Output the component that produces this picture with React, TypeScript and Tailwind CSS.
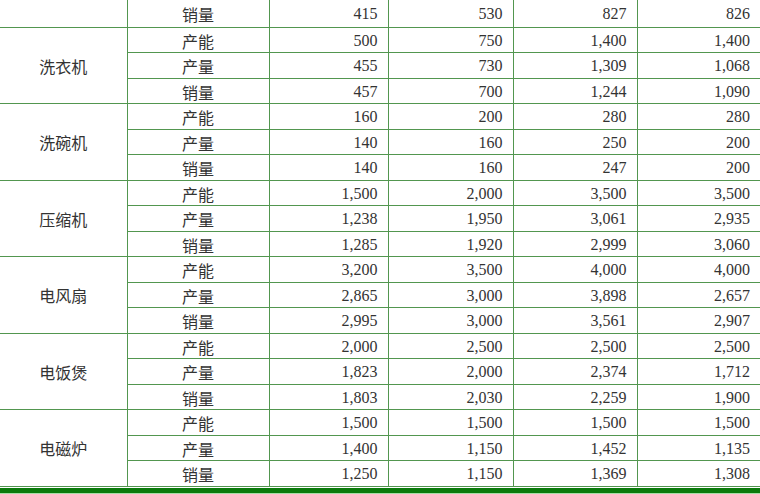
const groups: { name: string; rows: [string, string[]][] }[] = [
  {
    name: '洗衣机',
    rows: [
      ['产能', ['500', '750', '1,400', '1,400']],
      ['产量', ['455', '730', '1,309', '1,068']],
      ['销量', ['457', '700', '1,244', '1,090']],
    ],
  },
  {
    name: '洗碗机',
    rows: [
      ['产能', ['160', '200', '280', '280']],
      ['产量', ['140', '160', '250', '200']],
      ['销量', ['140', '160', '247', '200']],
    ],
  },
  {
    name: '压缩机',
    rows: [
      ['产能', ['1,500', '2,000', '3,500', '3,500']],
      ['产量', ['1,238', '1,950', '3,061', '2,935']],
      ['销量', ['1,285', '1,920', '2,999', '3,060']],
    ],
  },
  {
    name: '电风扇',
    rows: [
      ['产能', ['3,200', '3,500', '4,000', '4,000']],
      ['产量', ['2,865', '3,000', '3,898', '2,657']],
      ['销量', ['2,995', '3,000', '3,561', '2,907']],
    ],
  },
  {
    name: '电饭煲',
    rows: [
      ['产能', ['2,000', '2,500', '2,500', '2,500']],
      ['产量', ['1,823', '2,000', '2,374', '1,712']],
      ['销量', ['1,803', '2,030', '2,259', '1,900']],
    ],
  },
  {
    name: '电磁炉',
    rows: [
      ['产能', ['1,500', '1,500', '1,500', '1,500']],
      ['产量', ['1,400', '1,150', '1,452', '1,135']],
      ['销量', ['1,250', '1,150', '1,369', '1,308']],
    ],
  },
]

const cjk = "font-['Noto_Sans_CJK_SC',sans-serif]"
const num = "font-['Liberation_Serif',serif]"

function Values({ values }: { values: string[] }) {
  return (
    <>
      {values.map((v, i) => (
        <td
          key={i}
          className={`${num} pr-[10px] pt-[2px] text-right ${i < 3 ? 'border-r border-[#52964f]' : ''}`}
        >
          {v}
        </td>
      ))}
    </>
  )
}

export default function App() {
  return (
    <div className="w-[760px] h-[494px] overflow-hidden bg-white text-[16px] leading-none text-[#333]">
      <table className="w-[760px] table-fixed border-collapse">
        <colgroup>
          <col className="w-[127px]" />
          <col className="w-[142px]" />
          <col className="w-[119px]" />
          <col className="w-[125px]" />
          <col className="w-[124px]" />
          <col className="w-[123px]" />
        </colgroup>
        <tbody>
          <tr className="h-[27px] border-b border-[#52964f]">
            <td className="border-r border-[#52964f]" />
            <td className={`${cjk} text-center pt-[1px] border-r border-[#52964f]`}>销量</td>
            <Values values={['415', '530', '827', '826']} />
          </tr>
          {groups.map(g =>
            g.rows.map(([label, values], i) => (
              <tr key={g.name + label} className="h-[25.5px] border-b border-[#52964f]">
                {i === 0 && (
                  <td
                    rowSpan={3}
                    className={`${cjk} text-center pt-[1px] border-r border-[#52964f]`}
                  >
                    {g.name}
                  </td>
                )}
                <td className={`${cjk} text-center pt-[2px] border-r border-[#52964f]`}>
                  {label}
                </td>
                <Values values={values} />
              </tr>
            )),
          )}
        </tbody>
      </table>
      <div className="mt-[1px] h-[5px] bg-[#0b7a0b]" />
      <div className="h-[3px] bg-[#a6dea6]" />
    </div>
  )
}
